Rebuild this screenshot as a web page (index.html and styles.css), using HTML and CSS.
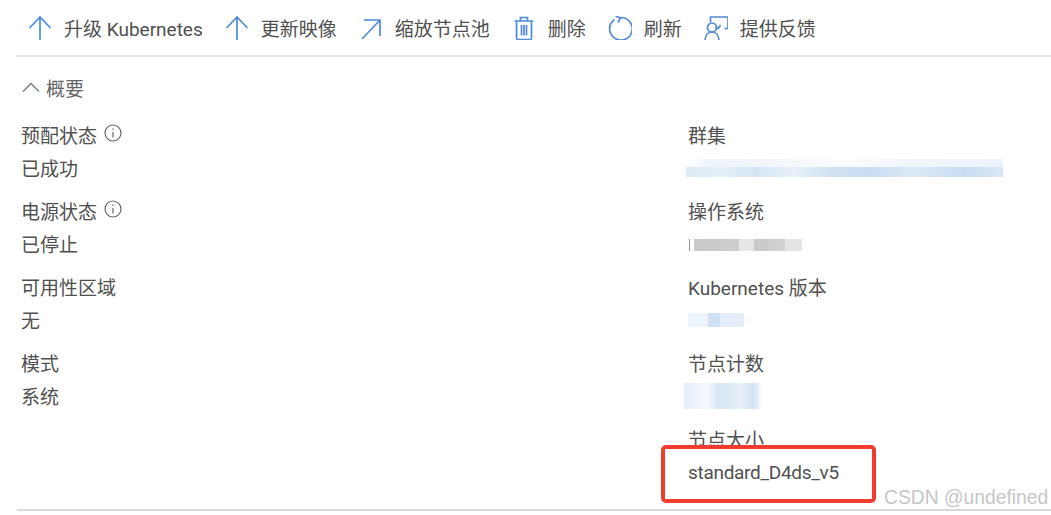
FILE: index.html
```html
<!DOCTYPE html>
<html>
<head>
<meta charset="utf-8">
<meta name="viewport" content="width=device-width, initial-scale=1">
<title>节点池概要</title>
<link rel="stylesheet" href="styles.css">
</head>
<body>

<div class="toolbar">
  <div class="tool">
    <svg class="icon" viewBox="0 0 24 24"><path d="M12 24V1M1.500 12 12 1l10.500 11"/></svg>
    <span>升级 Kubernetes</span>
  </div>
  <div class="tool">
    <svg class="icon" viewBox="0 0 24 24"><path d="M12 24V1M1.500 12 12 1l10.500 11"/></svg>
    <span>更新映像</span>
  </div>
  <div class="tool">
    <svg class="icon" viewBox="0 0 24 24"><path d="M3 23 21 4M5 4h16v16"/></svg>
    <span>缩放节点池</span>
  </div>
  <div class="tool">
    <svg class="icon" viewBox="0 0 24 24"><path d="M2.500 5h19M8.500 5V1.500h7V5M4.500 5v17a1.500 1.500 0 0 0 1.500 1.500h12a1.500 1.500 0 0 0 1.500-1.500V5M9.500 9v10.500M12 9v10.500M14.500 9v10.500"/></svg>
    <span>删除</span>
  </div>
  <div class="tool">
    <svg class="icon" viewBox="0 0 24 24"><path d="M6.500 3.500a11.300 11.300 0 1 0 6.500-2M7.500 0 12.500 2 10 6.500"/></svg>
    <span>刷新</span>
  </div>
  <div class="tool">
    <svg class="icon" viewBox="0 0 24 24"><path d="M6.500 6V1h17.500v11.500h-3.500M16.500 9l-2.200 3.500-2.800-1.500M1 24c.5-5 3.500-8 7-8s6.500 3 7 8"/><circle cx="8" cy="11.500" r="4.500"/></svg>
    <span>提供反馈</span>
  </div>
</div>

<div class="section-head">
  <svg class="chevron" viewBox="0 0 18 10"><path d="M1 9.500 9 1.500l8 8"/></svg>
  <span>概要</span>
</div>

<div class="columns">
  <div class="column">
    <div class="field">
      <div class="label">预配状态 <svg class="info" viewBox="0 0 18 18"><circle cx="9" cy="9" r="8"/><path d="M9 8v5.500M9 4.500v1.500"/></svg></div>
      <div class="value">已成功</div>
    </div>
    <div class="field">
      <div class="label">电源状态 <svg class="info" viewBox="0 0 18 18"><circle cx="9" cy="9" r="8"/><path d="M9 8v5.500M9 4.500v1.500"/></svg></div>
      <div class="value">已停止</div>
    </div>
    <div class="field">
      <div class="label">可用性区域</div>
      <div class="value">无</div>
    </div>
    <div class="field">
      <div class="label">模式</div>
      <div class="value">系统</div>
    </div>
  </div>

  <div class="column right">
    <div class="field">
      <div class="label">群集</div>
      <div class="value"><div class="blur blur-cluster"></div></div>
    </div>
    <div class="field">
      <div class="label">操作系统</div>
      <div class="value"><div class="blur blur-os"></div></div>
    </div>
    <div class="field">
      <div class="label">Kubernetes 版本</div>
      <div class="value"><div class="blur blur-version"></div></div>
    </div>
    <div class="field">
      <div class="label">节点计数</div>
      <div class="value"><div class="blur blur-count"></div></div>
    </div>
    <div class="field">
      <div class="label">节点大小</div>
      <div class="value vm-size">standard_D4ds_v5</div>
    </div>
  </div>
</div>

<div class="bottom-line"></div>

<!-- annotation + watermark sit on top of the screenshot -->
<div class="red-box"></div>
<div class="watermark">CSDN @undefined</div>

</body>
</html>
```

FILE: styles.css
```css
* {box-sizing: border-box;}

body {
  margin: 0;
  height: 515px;
  overflow: hidden;
  position: relative;
  background: #fff;
  color: #505050;
  font-family: Roboto, "Noto Sans CJK SC", sans-serif;
  font-size: 19px;
}

/* Top command bar */
.toolbar {
  display: flex;
  align-items: center;
  gap: 22px;
  height: 57px;
  margin-left: 17px;
  padding: 0 0 0 11px;
  border-bottom: 2px solid #e2e2e2;
}

.tool {
  display: flex;
  align-items: center;
  gap: 12px;
}

.icon {
  width: 24px;
  height: 24px;
  fill: none;
  stroke: #4f8bd9;
  stroke-width: 1.7;
}

/* Collapsible heading */
.section-head {
  display: flex;
  align-items: center;
  gap: 6px;
  height: 61px;
  padding-bottom: 1px;
  margin-left: 22px;
  color: #666;
}

.chevron {
  width: 18px;
  height: 10px;
  fill: none;
  stroke: #777;
  stroke-width: 1.3;
}

/* Two columns of label / value pairs */
.columns {
  display: grid;
  grid-template-columns: 667px 1fr;
  margin-left: 21px;
}

.field {
  margin-bottom: 10px;
}

.label, .value {
  display: flex;
  align-items: center;
  height: 33px;
  white-space: pre;
}

.vm-size {
  letter-spacing: -0.300px;
  padding-top: 2px;
}

.info {
  width: 18px;
  height: 18px;
  margin-left: 2px;
  margin-top: -3px;
  fill: none;
  stroke: #666;
  stroke-width: 1.2;
}

/* Pixelated patches that hide values */
.blur {
  height: 18px;
  background-repeat: no-repeat;
}

.blur-cluster {
  width: 317px;
  margin-left: -2px;
  background-image:
    linear-gradient(90deg, #dfeaf6, #e6eff9 12%, #d5e4f4 22%, #e9f1fa 34%, #d0e1f3 46%, #c9ddf2 58%, #dce8f6 72%, #c8dcf1 88%, #dbe8f6),
    linear-gradient(90deg, #fff, #eef4fb 8%, #f3f7fc 30%, #fafcfe 50%, #f1f6fc 70%, #edf3fb 100%);
  background-size: 100% 10px, 100% 8px;
  background-position: 0 8px, 0 0;
}

.blur-os {
  width: 114px;
  background-image: linear-gradient(90deg, #fff 1%, #999 1%, #999 2%, #fff 2%, #fff 5%, #c9c9c9 5%, #cdcdcd 45%, #e6e6e6 45%, #e6e6e6 58%, #c8c8c8 58%, #d2d2d2 85%, #e4e4e4 85%);
  background-size: 100% 12px;
  background-position: 0 4px;
}

.blur-version {
  width: 56px;
  background-image: linear-gradient(90deg, #eef4fb, #eef4fb 35%, #cfe1f3 35%, #cfe1f3 58%, #e4edf8 58%, #e4edf8);
  background-size: 100% 14px;
  background-position: 0 2px;
}

.blur-count {
  width: 77px;
  height: 26px;
  margin-left: -4px;
  background-image: linear-gradient(90deg, #e4edf8, #f5f8fc 30%, #d9e6f5 45%, #e7eff9 75%, #d3e3f4 90%, #f6f9fd);
}

.bottom-line {
  position: absolute;
  left: 17px;
  right: 0;
  bottom: 4px;
  height: 2px;
  background: #d9d9d9;
}

.red-box {
  position: absolute;
  left: 661px;
  top: 445px;
  width: 215px;
  height: 58px;
  border: 4px solid #ee3d2c;
  border-radius: 5px;
}

.watermark {
  position: absolute;
  left: 884px;
  top: 487px;
  color: #c6c6c6;
  font-family: "Liberation Sans", sans-serif;
  font-size: 19.300px;
  line-height: 22px;
}
```
